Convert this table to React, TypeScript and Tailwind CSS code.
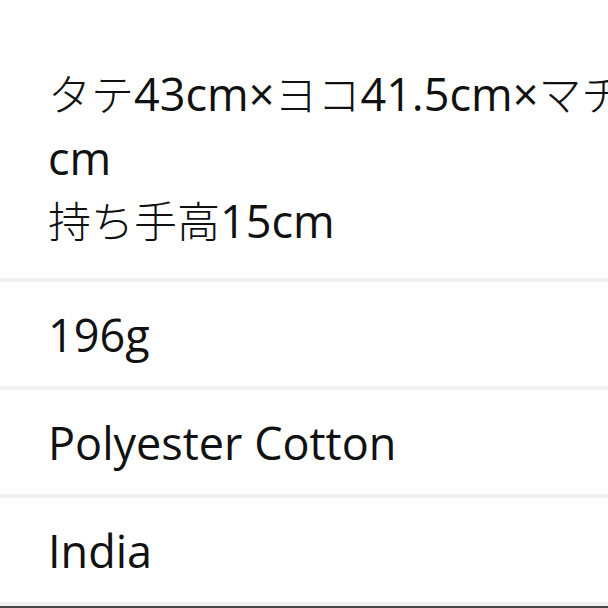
import React from "react";

export default function App() {
  const font = { fontFamily: '"Open Sans", "Noto Sans CJK JP", sans-serif' };
  return (
    <div className="w-[608px] h-[608px] overflow-hidden bg-white text-[#111]" style={font}>
      <div className="flex flex-col text-[45px] leading-[63px]">
        <div className="pt-[62px] pb-[25px] pl-[48px] whitespace-nowrap">
          <div>
            <span className="font-light text-[43px]">タテ</span>43cm×<span className="font-light text-[43px]">ヨコ</span>41.5cm×<span className="font-light text-[43px]">マチ</span>10
          </div>
          <div>cm</div>
          <div>
            <span className="font-light text-[43px]">持ち手高</span>15cm
          </div>
        </div>
        <div className="h-[4px] bg-[#f0f0f0]" />
        <div className="pt-[21px] pb-[20px] pl-[48px]">196g</div>
        <div className="h-[4px] bg-[#f0f0f0]" />
        <div className="pt-[21px] pb-[20px] pl-[48px]">Polyester Cotton</div>
        <div className="h-[4px] bg-[#f0f0f0]" />
        <div className="pt-[21px] pb-[20px] pl-[48px]">India</div>
        <div className="h-[4px] bg-[#f0f0f0]" />
        <div className="h-[4px] bg-[#444]" />
      </div>
    </div>
  );
}
